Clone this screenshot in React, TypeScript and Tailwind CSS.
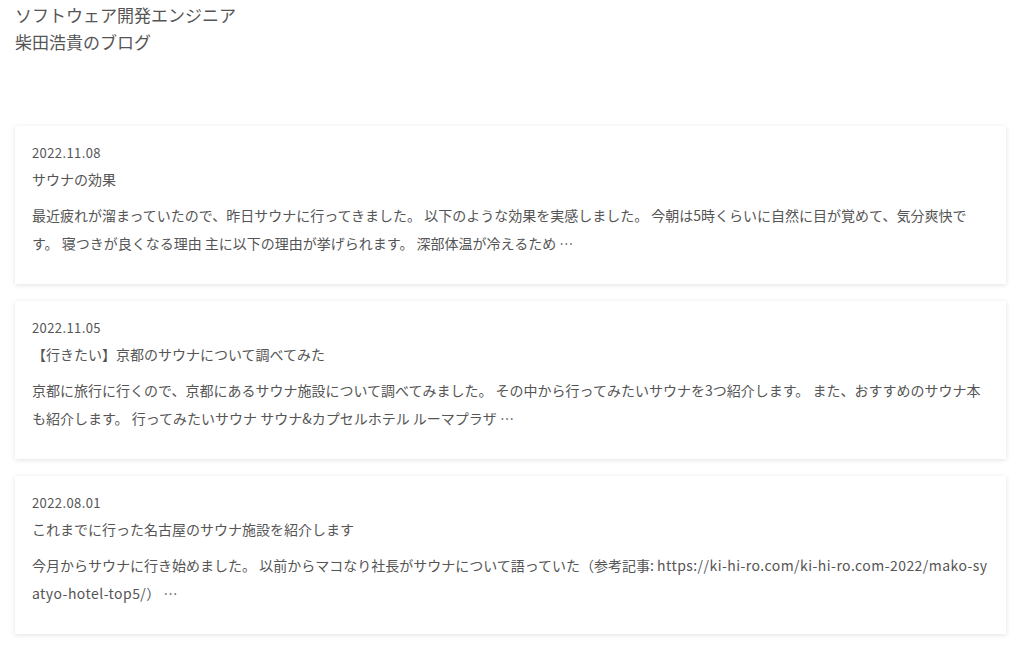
import type { ReactNode } from 'react';

const posts: { date: string; title: string; excerpt: ReactNode }[] = [
  {
    date: '2022.11.08',
    title: 'サウナの効果',
    excerpt:
      '最近疲れが溜まっていたので、昨日サウナに行ってきました。 以下のような効果を実感しました。 今朝は5時くらいに自然に目が覚めて、気分爽快です。 寝つきが良くなる理由 主に以下の理由が挙げられます。 深部体温が冷えるため …',
  },
  {
    date: '2022.11.05',
    title: '【行きたい】京都のサウナについて調べてみた',
    excerpt:
      '京都に旅行に行くので、京都にあるサウナ施設について調べてみました。 その中から行ってみたいサウナを3つ紹介します。 また、おすすめのサウナ本も紹介します。 行ってみたいサウナ サウナ&カプセルホテル ルーマプラザ …',
  },
  {
    date: '2022.08.01',
    title: 'これまでに行った名古屋のサウナ施設を紹介します',
    excerpt: (
      <>
        今月からサウナに行き始めました。 以前からマコなり社長がサウナについて語っていた（参考記事:{' '}
        <span className="tracking-[0.45px]">https://ki-hi-ro.com/ki-hi-ro.com-2022/mako-syatyo-hotel-top5/</span>） …
      </>
    ),
  },
];

export default function App() {
  return (
    <div className="min-h-[648px] bg-white text-[#555] font-['Noto_Sans_CJK_JP','Noto_Sans',sans-serif]">
      <header className="px-[15px] pt-[1px]">
        <p className="text-[17px] leading-[27px]">ソフトウェア開発エンジニア</p>
        <p className="text-[17px] leading-[27px]">柴田浩貴のブログ</p>
      </header>

      <main className="mt-[71px] ml-[15px] mr-[18px] flex flex-col gap-[17px]">
        {posts.map((post) => (
          <article
            key={post.date}
            className="h-[158px] bg-white px-[17px] pt-[17px] shadow-[0_1px_5px_rgba(0,0,0,0.12)]"
          >
            <p className="text-[13px] leading-[20px] tracking-[0.4px]">{post.date}</p>
            <h2 className="mt-[3px] text-[14px] leading-[26px]">{post.title}</h2>
            <p className="mt-[9px] text-[14px] leading-[28px] break-all">{post.excerpt}</p>
          </article>
        ))}
      </main>
    </div>
  );
}
